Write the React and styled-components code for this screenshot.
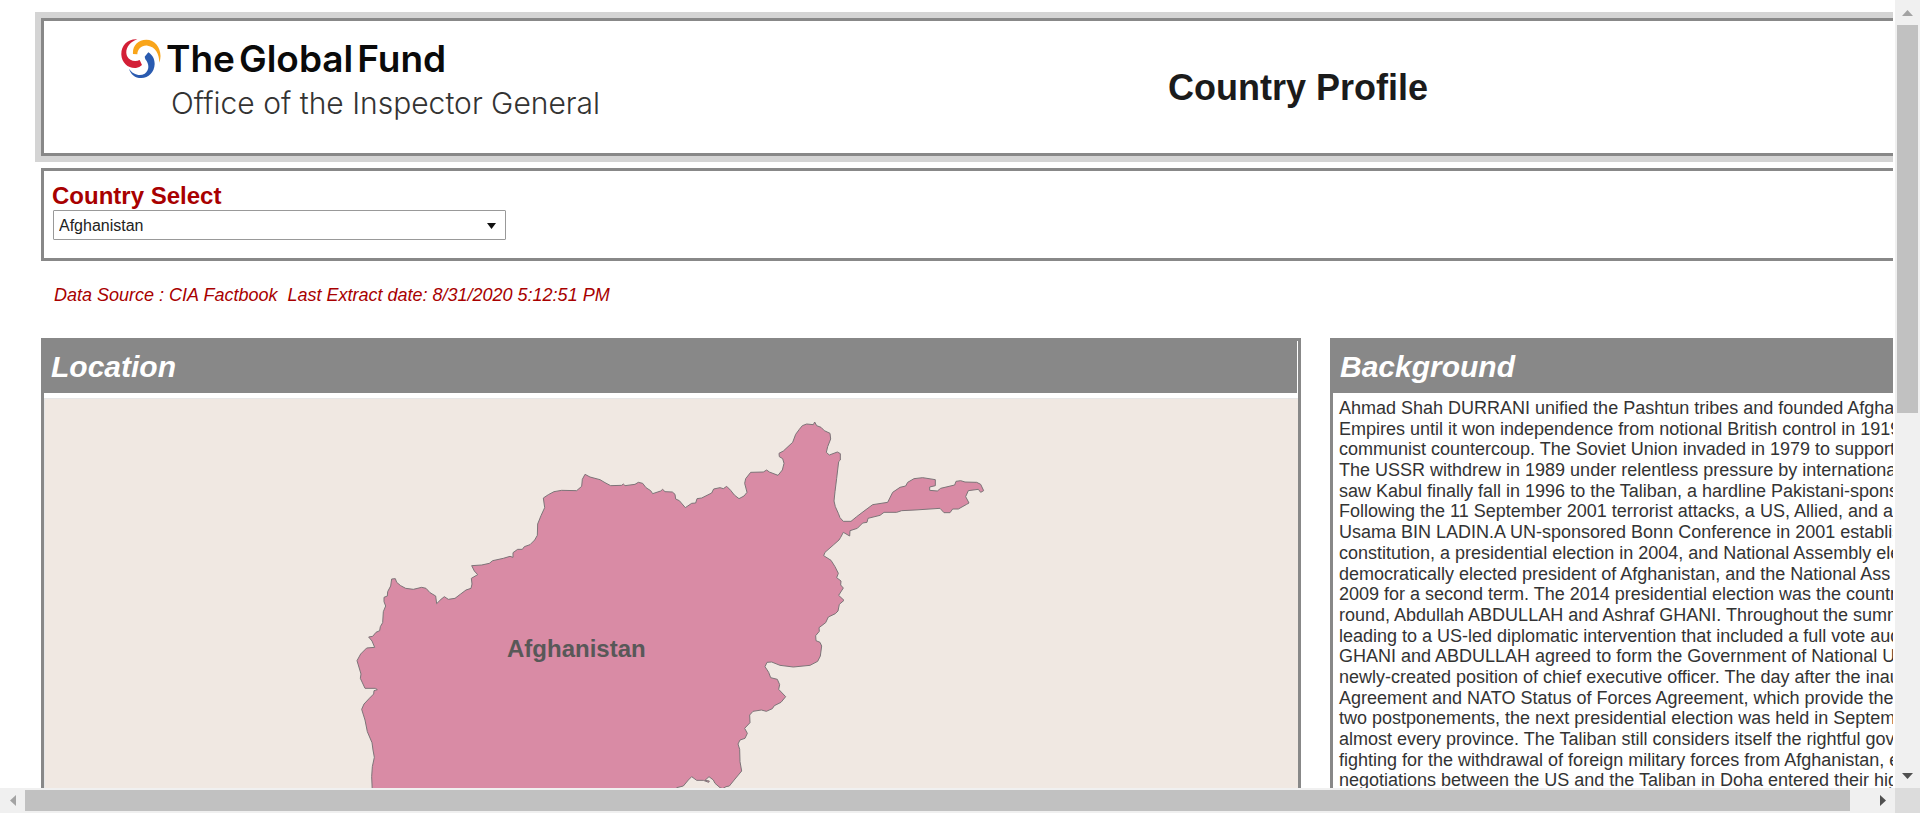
import React from "react";
import styled, { createGlobalStyle, css } from "styled-components";

const GlobalStyle = createGlobalStyle`
  *, *::before, *::after { box-sizing: border-box; }
  body {
    margin: 0;
    background: #fff;
    color: #1b1b1b;
    font-family: "Liberation Sans", Arial, sans-serif;
  }
`;

const Shell = styled.div`
  display: grid;
  grid-template-columns: minmax(0, 1fr) 25px;
  grid-template-rows: minmax(0, 1fr) 25px;
  height: 100vh;
`;

const Viewport = styled.div`
  overflow: hidden;
  margin-right: 2px;
`;

const Canvas = styled.main`
  display: flex;
  flex-direction: column;
  width: calc(100% + 41px);
  height: 100%;
  padding: 12px 0 0 35px;
`;

const HeaderFrame = styled.header`
  padding: 6px;
  background: #d4d4d4;
`;

const HeaderBox = styled.div`
  display: grid;
  grid-template-columns: 1fr 2fr;
  height: 138px;
  border: 3px solid #888;
  background: #fff;
`;

const Logo = styled.div`
  display: grid;
  grid-template-columns: 46px max-content;
  align-content: start;
  padding: 16px 0 0 76px;
`;

const LogoMark = styled.svg`
  width: 42px;
  height: 42px;
  margin-top: 2px;
`;

const LogoName = styled.div`
  display: flex;
  gap: 4px;
  font: 600 37px/44px Inter, sans-serif;
  color: #0a0a0a;
`;

const LogoUnit = styled.div`
  grid-column: 2;
  padding-left: 5px;
  font: 300 30px/44px Inter, sans-serif;
  color: #333;
`;

const PageTitle = styled.h1`
  margin: 0;
  padding-top: 2px;
  align-self: center;
  text-align: center;
  font-size: 36px;
  line-height: 42px;
`;

const Inset = styled.div`
  display: flex;
  flex: 1;
  flex-direction: column;
  min-height: 0;
  padding: 0 6px;
`;

const FilterBox = styled.section`
  display: flex;
  flex-direction: column;
  align-items: flex-start;
  height: 93px;
  margin-top: 6px;
  padding: 11px 8px;
  border: 3px solid #888;
`;

const FilterLabel = styled.label`
  font-size: 24px;
  font-weight: 700;
  line-height: 28px;
  color: #a80000;
`;

const SelectWrap = styled.div`
  position: relative;
  width: 24%;
  min-width: 453px;
  margin-left: 1px;
`;

const CountrySelect = styled.select`
  appearance: none;
  display: block;
  width: 100%;
  height: 30px;
  padding: 0 5px;
  border: 1px solid #999;
  border-radius: 1px;
  background: #fff;
  color: #222;
  font: 16px "Liberation Sans", Arial, sans-serif;
`;

const SelectArrow = styled.svg`
  position: absolute;
  top: 13px;
  right: 10px;
  width: 9px;
  height: 6px;
  pointer-events: none;
`;

const SourceNote = styled.p`
  margin: 24px 0 33px 13px;
  font-size: 18px;
  font-style: italic;
  line-height: 20px;
  color: #a80000;
  white-space: pre;
`;

const Panels = styled.div`
  display: grid;
  flex: 1;
  grid-template-columns: minmax(0, 1260fr) minmax(0, 598fr);
  gap: 29px;
  min-height: 0;
`;

const Panel = styled.section`
  display: flex;
  flex-direction: column;
  min-height: 0;
  border: 3px solid #888;
  border-bottom: 0;
`;

const PanelTitle = styled.h2`
  flex: none;
  margin: 0;
  padding: 0 7px;
  background: #888;
  color: #fff;
  font-size: 30px;
  font-style: italic;
  line-height: 52px;
  ${(p) => p.$edged && css`border-right: 1px solid #fff;`}
`;

const MapArea = styled.div`
  flex: 1;
  min-height: 0;
  margin-top: 5px;
  border-top: 1px solid #e6e6e6;
  border-left: 1px solid #e6e6e6;
  background: #f0e8e2;
`;

const MapDrawing = styled.svg`
  display: block;
  width: 100%;
  height: 100%;
`;

const BackgroundText = styled.div`
  padding: 5px 6px 0;
  overflow: hidden;
  font-size: 18px;
  line-height: 1.15;
  color: #333;
  white-space: pre;
`;

const ScrollBar = styled.div`
  display: flex;
  flex-direction: ${(p) => (p.$vertical ? "column" : "row")};
  background: #f0f0f0;
`;

const ScrollButton = styled.button`
  display: grid;
  flex: none;
  place-items: center;
  width: 25px;
  height: 25px;
  padding: 0;
  border: 0;
  background: transparent;
  color: #505050;
  &:disabled { color: #a3a3a3; }
`;

const Track = styled.div`
  display: flex;
  flex: 1;
  flex-direction: ${(p) => (p.$vertical ? "column" : "row")};
  padding: ${(p) => (p.$vertical ? "0 2px" : "2px 0")};
`;

const Thumb = styled.div`
  flex: 0 0 ${(p) => p.$share};
  background: #c1c1c1;
`;

const Corner = styled.div`
  background: #dcdcdc;
`;

const arrows = {
  up: "M5.5 0 11 6H0z",
  down: "M0 0h11L5.5 6z",
  left: "M6 0v11L0 5.5z",
  right: "M0 0l6 5.5L0 11z",
};

function Arrow({ dir }) {
  const upright = dir === "up" || dir === "down";
  return (
    <svg width={upright ? 11 : 6} height={upright ? 6 : 11} fill="currentColor" aria-hidden="true">
      <path d={arrows[dir]} />
    </svg>
  );
}

function Scroller({ vertical, share, start, end, labels }) {
  return (
    <ScrollBar $vertical={vertical}>
      <ScrollButton type="button" disabled aria-label={labels[0]}><Arrow dir={start} /></ScrollButton>
      <Track $vertical={vertical}><Thumb $share={share} /></Track>
      <ScrollButton type="button" aria-label={labels[1]}><Arrow dir={end} /></ScrollButton>
    </ScrollBar>
  );
}

const border =
  "M97 1175 95 1130 97 1100 103 1072 99 1050 96 1028 82 995 75 960 65 928 72 912 88 895 101 882 102 872 112 869 106 865 75 865 61 835 63 822 51 782 62 762 80 744 104 742 96 723 86 711 98 709 108 697 119 692 121 680 128 668 130 635 137 618 132 605 132 592 142 588 143 575 152 558 155 537 166 536 170 547 182 557 197 565 220 568 245 562 258 565 270 578 287 588 290 611 303 598 313 590 325 598 345 595 362 582 378 570 393 565 396 552 394 535 413 524 403 513 395 497 425 495 448 490 458 482 490 475 510 469 519 472 519 458 533 448 547 448 553 440 570 434 584 420 592 406 593 372 603 347 614 323 610 294 625 284 642 275 665 271 710 272 725 259 727 238 735 223 750 231 780 239 795 248 812 257 845 256 850 252 855 257 885 253 895 247 908 250 918 263 932 272 938 281 962 273 968 268 975 275 997 276 1005 283 1007 297 1018 302 1036 323 1055 310 1067 309 1071 296 1085 294 1115 279 1121 267 1140 263 1150 266 1160 259 1172 271 1183 285 1197 296 1212 288 1221 277 1214 250 1217 236 1232 217 1270 216 1280 210 1288 216 1314 226 1327 210 1332 190 1328 176 1318 170 1317 160 1330 153 1358 127 1367 103 1378 88 1387 77 1400 72 1420 74 1424 66 1430 77 1443 82 1453 92 1470 100 1472 117 1463 140 1459 157 1468 165 1492 156 1501 161 1501 180 1496 185 1490 235 1485 275 1482 303 1486 320 1495 340 1500 353 1510 364 1533 364 1550 350 1575 331 1598 314 1643 307 1658 277 1680 262 1697 258 1703 247 1722 236 1748 233 1786 239 1786 257 1769 261 1769 271 1792 273 1802 265 1844 255 1848 244 1862 242 1875 246 1910 247 1922 253 1931 272 1922 277 1915 268 1885 272 1877 290 1887 309 1880 313 1855 327 1838 327 1830 338 1812 338 1800 325 1725 330 1685 332 1670 337 1632 337 1620 346 1584 355 1581 367 1568 369 1552 385 1530 392 1529 408 1510 397 1502 412 1497 420 1480 435 1455 457 1451 467 1473 481 1485 500 1495 520 1490 533 1503 543 1502 555 1510 564 1496 586 1512 601 1498 613 1494 633 1486 641 1465 651 1457 668 1437 683 1438 694 1427 707 1428 722 1440 727 1445 738 1441 768 1433 784 1410 796 1360 801 1320 796 1295 786 1281 787 1275 800 1286 817 1292 833 1312 838 1319 854 1316 868 1337 890 1323 907 1303 917 1297 926 1279 934 1264 930 1239 934 1229 945 1230 968 1214 985 1222 1000 1215 1015 1200 1020 1194 1032 1199 1048 1200 1085 1205 1113 1185 1137 1168 1158 1158 1160 1148 1166 1140 1163 1125 1150 1120 1140 1107 1130 1095 1141 1108 1143 1106 1147 1090 1141 1070 1141 1055 1130 1045 1140 1030 1158 1010 1163 1000 1180z";

const background = `Ahmad Shah DURRANI unified the Pashtun tribes and founded Afghan
Empires until it won independence from notional British control in 1919
communist countercoup. The Soviet Union invaded in 1979 to support
The USSR withdrew in 1989 under relentless pressure by international
saw Kabul finally fall in 1996 to the Taliban, a hardline Pakistani-spons
Following the 11 September 2001 terrorist attacks, a US, Allied, and a
Usama BIN LADIN.A UN-sponsored Bonn Conference in 2001 establis
constitution, a presidential election in 2004, and National Assembly ele
democratically elected president of Afghanistan, and the National Ass
2009 for a second term. The 2014 presidential election was the countr
round, Abdullah ABDULLAH and Ashraf GHANI. Throughout the summ
leading to a US-led diplomatic intervention that included a full vote aud
GHANI and ABDULLAH agreed to form the Government of National U
newly-created position of chief executive officer. The day after the inau
Agreement and NATO Status of Forces Agreement, which provide the
two postponements, the next presidential election was held in Septem
almost every province. The Taliban still considers itself the rightful gov
fighting for the withdrawal of foreign military forces from Afghanistan, e
negotiations between the US and the Taliban in Doha entered their hig`;

export default function App() {
  return (
    <>
      <GlobalStyle />
      <Shell>
        <Viewport>
          <Canvas>
            <HeaderFrame>
              <HeaderBox>
                <Logo>
                  <LogoMark viewBox="60 41 126 126" aria-hidden="true">
                    <path fill="#d31f36" d="M112 42C82 40 63 62 64 88c1 24 21 42 44 40q10-1 18-9l-7-15c-14 7-31 2-38-12-8-20 7-42 31-50z" />
                    <path fill="#f9a51a" d="M99 86C97 62 113 43 139 43c31 0 51 35 39 69 0-27-12-48-35-51-18-2-30 9-31 26z" />
                    <path fill="#2a5bb0" d="M145 81c12 8 19 19 19 35-1 25-18 42-40 42-19 0-32-11-37-28 10 16 31 24 47 15 15-10 14-29 2-43l-2-8z" />
                  </LogoMark>
                  <LogoName><span>The</span><span>Global</span><span>Fund</span></LogoName>
                  <LogoUnit>Office of the Inspector General</LogoUnit>
                </Logo>
                <PageTitle>Country Profile</PageTitle>
              </HeaderBox>
            </HeaderFrame>
            <Inset>
              <FilterBox>
                <FilterLabel htmlFor="country">Country Select</FilterLabel>
                <SelectWrap>
                  <CountrySelect id="country" defaultValue="Afghanistan">
                    <option>Afghanistan</option>
                  </CountrySelect>
                  <SelectArrow viewBox="0 0 9 6" aria-hidden="true"><path d="M0 0h9L4.500 6z" fill="#111" /></SelectArrow>
                </SelectWrap>
              </FilterBox>
              <SourceNote>{"Data Source : CIA Factbook  Last Extract date: 8/31/2020 5:12:51 PM"}</SourceNote>
              <Panels>
                <Panel>
                  <PanelTitle $edged>Location</PanelTitle>
                  <MapArea>
                    <MapDrawing viewBox="-885 -3 3759 1167" preserveAspectRatio="xMidYMin slice" role="img" aria-label="Map of Afghanistan">
                      <path d={border} fill="#d98ba5" stroke="#7d7478" strokeWidth="3" strokeLinejoin="round" />
                      <text x="709" y="771" fontSize="72" fontWeight="700" textAnchor="middle" fill="#585858">Afghanistan</text>
                    </MapDrawing>
                  </MapArea>
                </Panel>
                <Panel>
                  <PanelTitle>Background</PanelTitle>
                  <BackgroundText>{background}</BackgroundText>
                </Panel>
              </Panels>
            </Inset>
          </Canvas>
        </Viewport>
        <Scroller vertical share="52.6%" start="up" end="down" labels={["Scroll up", "Scroll down"]} />
        <Scroller share="98.9%" start="left" end="right" labels={["Scroll left", "Scroll right"]} />
        <Corner />
      </Shell>
    </>
  );
}
